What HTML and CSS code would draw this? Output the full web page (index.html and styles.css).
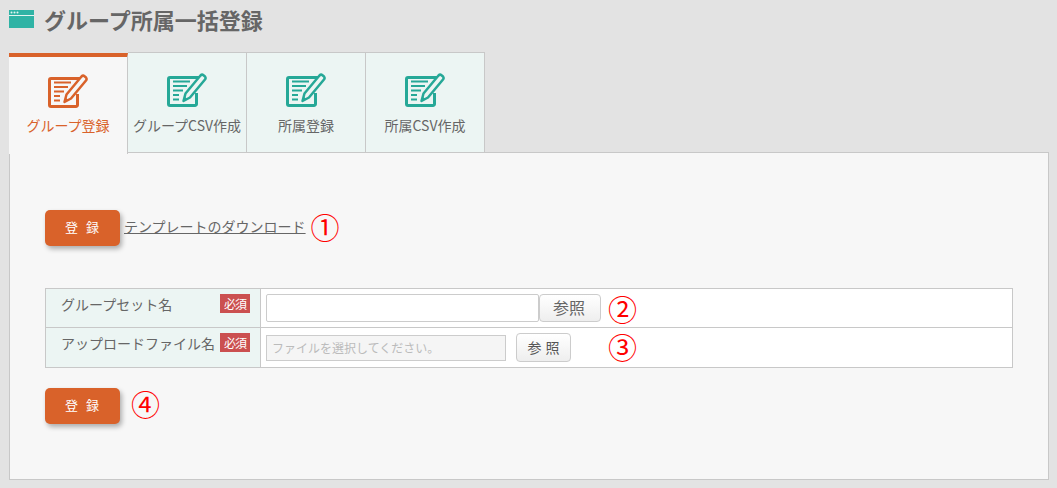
FILE: index.html
```html
<!DOCTYPE html>
<html lang="ja">
<head>
<meta charset="utf-8">
<title>グループ所属一括登録</title>
<link rel="stylesheet" href="styles.css">
</head>
<body>
<svg width="0" height="0" class="defs">
  <defs>
    <symbol id="edit" viewBox="0 0 40 34">
      <path d="M32 4.500 H3 A1.500 1.500 0 0 0 1.500 6 V31 A1.500 1.500 0 0 0 3 32.500 H28 A1.500 1.500 0 0 0 29.500 31 V20" fill="none" stroke="currentColor" stroke-width="3"/>
      <path d="M6 8.500H23M6 13H20M6 17.500H16M6 22H12M6 26.500H12" fill="none" stroke="currentColor" stroke-width="2.200"/>
      <path d="M16.500 28 L18.500 20.500 L33.500 2.500 Q35 1 36.500 2.200 L38 3.500 Q39.200 5 38 6.500 L23 24.500 Z" fill="none" stroke="currentColor" stroke-width="2.500" stroke-linejoin="round"/>
      <path d="M16.500 28 L17.500 23.500 L21 26.500 Z" fill="currentColor"/>
    </symbol>
  </defs>
</svg>
<header class="title">
  <svg class="title-icon" viewBox="0 0 25 18" width="25" height="18">
    <rect width="25" height="18" fill="#2fb3a5"/>
    <rect y="5" width="25" height="1" fill="#e3f4f1"/>
    <circle cx="2.500" cy="2.500" r="1" fill="#e3f4f1"/>
    <circle cx="5.500" cy="2.500" r="1" fill="#e3f4f1"/>
    <circle cx="8.500" cy="2.500" r="1" fill="#e3f4f1"/>
  </svg>
  <h1>グループ所属一括登録</h1>
</header>
<nav class="tabs">
  <a class="tab active"><svg class="tab-icon"><use href="#edit"/></svg><span>グループ登録</span></a>
  <a class="tab"><svg class="tab-icon"><use href="#edit"/></svg><span>グループCSV作成</span></a>
  <a class="tab"><svg class="tab-icon"><use href="#edit"/></svg><span>所属登録</span></a>
  <a class="tab"><svg class="tab-icon"><use href="#edit"/></svg><span>所属CSV作成</span></a>
</nav>
<main class="panel">
  <div class="row-top">
    <button class="btn-main">登 録</button>
    <a class="dl-link">テンプレートのダウンロード</a>
    <span class="mark mark-1">①</span>
  </div>
  <table class="form">
    <tr class="row-a">
      <th><span class="th-inner"><span class="th-name">グループセット名</span><span class="req">必須</span></span></th>
      <td><div class="cell"><input class="text-input" type="text"><button class="btn-ref wide">参照</button><span class="mark mark-2">②</span></div></td>
    </tr>
    <tr class="row-b">
      <th><span class="th-inner"><span class="th-name">アップロードファイル名</span><span class="req">必須</span></span></th>
      <td><div class="cell"><input class="file-input" type="text" placeholder="ファイルを選択してください。" disabled><button class="btn-ref small">参 照</button><span class="mark mark-3">③</span></div></td>
    </tr>
  </table>
  <div class="row-bottom">
    <button class="btn-main">登 録</button>
    <span class="mark mark-4">④</span>
  </div>
</main>
</body>
</html>
```
FILE: styles.css
```css
* { box-sizing: border-box; }
html, body { height: 100%; }
body {
  margin: 0;
  padding: 0 8px 0 9px;
  background: #e3e3e3;
  color: #666;
  font-family: "Noto Sans CJK JP", "Noto Sans", sans-serif;
  font-size: 14px;
  overflow: hidden;
}
.defs { position: absolute; }
.title { display: flex; align-items: center; height: 38px; }
.title-icon { display: block; margin-right: 10px; }
.title h1 { margin: 0; font-size: 22px; font-weight: 700; color: #666; line-height: 1; }
.tabs { display: flex; height: 101px; margin-top: 14px; position: relative; z-index: 1; }
.tab {
  width: 119px;
  height: 101px;
  background: #ecf5f3;
  border: 1px solid #c8c8c8;
  border-left: 0;
  color: #666;
  display: flex;
  flex-direction: column;
  align-items: center;
  padding-top: 20px;
  font-size: 14px;
  white-space: nowrap;
}
.tab .tab-icon { width: 40px; height: 34px; color: #26a897; display: block; margin-bottom: 6px; }
.tab span { line-height: 24px; }
.tab.active {
  background: #f7f7f7;
  border-top: 4px solid #d9622a;
  border-bottom: 0;
  margin-top: 1px;
  padding-top: 17px;
  color: #d9622a;
  position: relative;
  z-index: 2;
  height: 101px;
}
.tab.active .tab-icon { color: #d9622a; margin-bottom: 5px; }
.panel {
  margin-top: -1px;
  width: 1040px;
  height: 328px;
  background: #f7f7f7;
  border: 1px solid #c8c8c8;
  padding: 57px 35px 0;
}
.row-top { display: flex; align-items: center; height: 36px; }
.btn-main {
  width: 75px;
  height: 36px;
  border: 0;
  border-radius: 5px;
  background: #d9622a;
  color: #fff;
  font-family: inherit;
  font-size: 13px;
  word-spacing: 5px;
  box-shadow: 2px 3px 5px rgba(0,0,0,.3);
  padding: 0 1px 3px 0;
}
.dl-link { margin-left: 4px; color: #666; text-decoration: underline; font-size: 14px; line-height: 36px; margin-top: -4px; }
.mark { color: #f00; font-size: 29px; line-height: 1; font-weight: 400; font-family: "Noto Sans CJK JP", sans-serif; }
.mark-1 { margin-left: 5px; margin-top: -3px; }
.mark-2 { margin-left: 7px; }
.mark-3 { margin-left: 37px; margin-top: -2px; }
.mark-4 { margin-left: 11px; margin-top: -5px; }
.form { margin-top: 42px; width: 968px; border-collapse: collapse; background: #fff; table-layout: fixed; }
.form th, .form td { border: 1px solid #c8c8c8; padding: 0; }
.form th { width: 215px; background: #ecf5f3; font-weight: 400; text-align: left; vertical-align: top; }
.row-a { height: 39px; }
.row-b { height: 40px; }
.th-inner { display: flex; justify-content: space-between; align-items: flex-start; padding: 5px 10px 0 15px; }
.th-name { font-size: 14px; line-height: 24px; margin-top: -2px; white-space: nowrap; }
.req {
  width: 30px;
  height: 19px;
  background: #cb5050;
  color: #fff;
  font-size: 12px;
  line-height: 19px;
  text-align: center;
  letter-spacing: -1px;
  white-space: nowrap;
  flex: none;
}
.cell { display: flex; align-items: center; padding-left: 5px; }
.text-input { width: 273px; height: 28px; border: 1px solid #ccc; border-radius: 2px; background: #fff; padding: 0 5px; }
.file-input {
  width: 240px;
  height: 26px;
  border: 1px solid #ccc;
  background: #f5f5f5;
  padding: 0 5px;
  font-family: inherit;
  font-size: 12px;
}
.file-input::placeholder { color: #bbb; opacity: 1; }
.btn-ref {
  border: 1px solid #ccc;
  border-radius: 4px;
  background: linear-gradient(#fff, #eee);
  color: #666;
  font-family: inherit;
  padding: 0;
}
.btn-ref.wide { width: 62px; height: 28px; font-size: 16px; padding-right: 2px; padding-bottom: 2px; }
.btn-ref.small { width: 55px; height: 29px; font-size: 14px; margin-left: 10px; word-spacing: 1px; color: #555; padding-bottom: 2px; }
.row-bottom { display: flex; align-items: center; height: 36px; margin-top: 20px; }
```
